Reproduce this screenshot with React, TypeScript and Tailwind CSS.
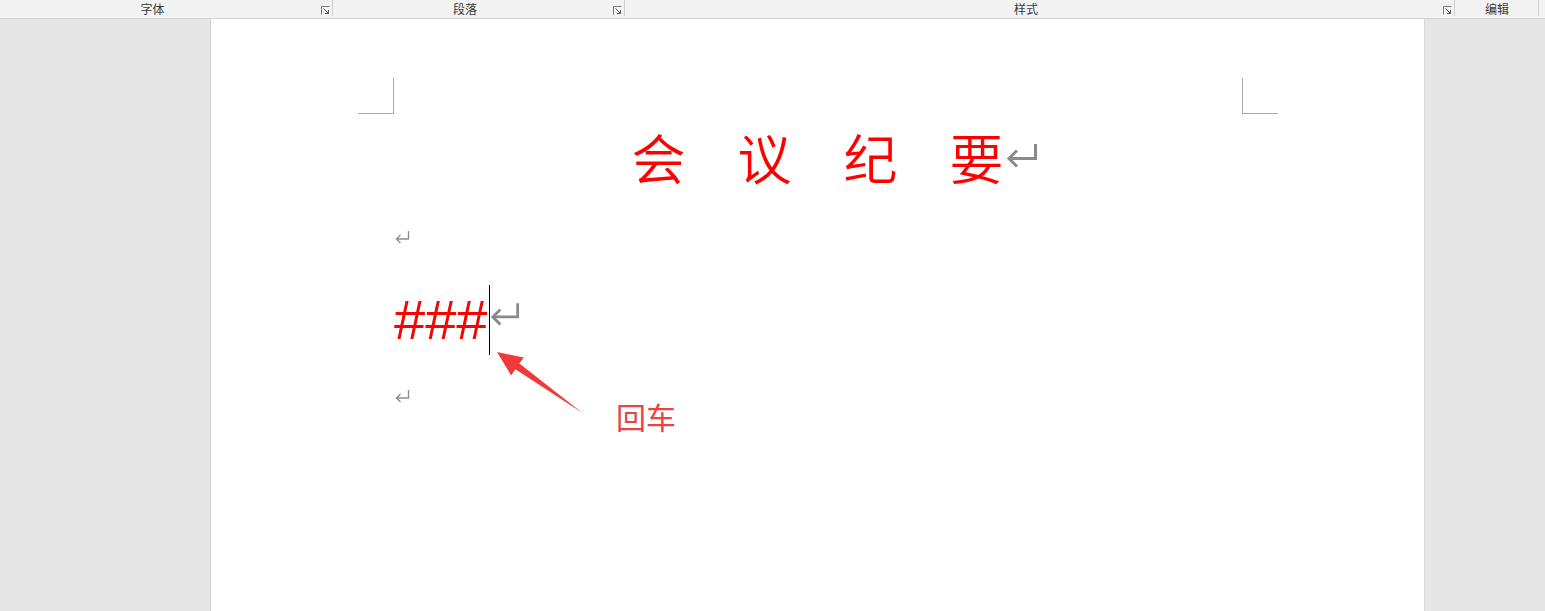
import React from "react";

const cjk = { fontFamily: '"Noto Sans CJK SC", "Noto Sans", sans-serif' };

function Launcher() {
  return (
    <svg width="9" height="9" viewBox="0 0 9 9" className="absolute right-[3px] top-[6px]">
      <path d="M0.5 8.5 V0.5 H8.5" fill="none" stroke="#7a7a7a" strokeWidth="1" />
      <path d="M2.5 2.5 L7.5 7.5 M7.5 4 V7.5 H4" fill="none" stroke="#555" strokeWidth="1" />
    </svg>
  );
}

function Section({ w, label, launcher = true }: { w: number; label: string; launcher?: boolean }) {
  return (
    <div className="relative flex h-full shrink-0" style={{ width: w }}>
      <div
        className={`flex flex-1 items-start justify-center pt-[1px] text-[12px] leading-[15px] text-[#3a3a3a] ${launcher ? "pr-[28px]" : ""}`}
        style={cjk}
      >
        {label}
      </div>
      {launcher && <Launcher />}
      <div className="absolute right-0 top-0 h-[16px] w-px bg-[#cfcfcf]" />
    </div>
  );
}

function SmallReturn() {
  return (
    <svg width="17" height="15" viewBox="0 0 17 15">
      <path d="M14.5 1 V9 H2.5" fill="none" stroke="#8c8c8c" strokeWidth="1.3" />
      <path d="M6.5 5 L2.5 9 L6.5 13" fill="none" stroke="#8c8c8c" strokeWidth="1.3" />
    </svg>
  );
}

function BigReturn({ w, h }: { w: number; h: number }) {
  return (
    <svg width={w} height={h} viewBox="0 0 32 26">
      <path d="M29.5 0 V14.5 H3" fill="none" stroke="#8a8a8a" strokeWidth="3" />
      <path d="M11 6.5 L3 14.5 L11 22.5" fill="none" stroke="#8a8a8a" strokeWidth="3" />
    </svg>
  );
}

export default function App() {
  const chars = ["会", "议", "纪", "要"];
  return (
    <div className="relative flex h-[611px] w-[1545px] flex-col overflow-hidden bg-[#e6e6e6]">
      {/* ribbon group labels */}
      <div className="flex h-[19px] shrink-0 border-b border-[#d6d6d6] bg-[#f3f3f3]">
        <Section w={333} label="字体" />
        <Section w={292} label="段落" />
        <Section w={830} label="样式" />
        <Section w={84} label="编辑" launcher={false} />
        <div className="flex-1" />
      </div>

      {/* document area */}
      <div className="flex flex-1">
        <div className="w-[211px] shrink-0 border-r border-[#cdcdcd]" />
        <div className="flex w-[1213px] shrink-0 flex-col bg-white pt-[59px]">
          {/* corner marks */}
          <div className="flex justify-between pl-[147px] pr-[146px]">
            <div className="h-[36px] w-[36px] border-b border-r border-[#a8a8a8]" />
            <div className="h-[36px] w-[36px] border-b border-l border-[#a8a8a8]" />
          </div>

          {/* title */}
          <div className="mt-[16px] flex justify-center gap-[52px] pl-[182px] pr-[182px]">
            {chars.map((c, i) => (
              <span
                key={c}
                className="relative block text-[54px] font-[350] leading-[54px] text-[#ff0000]"
                style={cjk}
              >
                {c}
                {i === chars.length - 1 && (
                  <span className="absolute left-full top-[14px] ml-[2px] block">
                    <BigReturn w={32} h={26} />
                  </span>
                )}
              </span>
            ))}
          </div>

          {/* empty paragraph */}
          <div className="ml-[183px] mt-[46px] h-[15px]">
            <SmallReturn />
          </div>

          {/* ### line */}
          <div className="ml-[183px] mt-[40px] flex h-[70px] items-start">
            <span
              className="text-[56px] leading-[70px] text-[#ff0000]"
              style={{ fontFamily: '"Liberation Sans", Arial, sans-serif' }}
            >
              ###
            </span>
            <div className="ml-[2px] h-[70px] w-px bg-black" />
            <div className="mt-[18px]">
              <BigReturn w={30} h={25} />
            </div>
          </div>

          {/* empty paragraph */}
          <div className="ml-[183px] mt-[34px] h-[15px]">
            <SmallReturn />
          </div>
        </div>
        <div className="flex-1 border-l border-[#dadada]" />
      </div>

      {/* annotation arrow */}
      <svg
        className="pointer-events-none absolute left-0 top-0"
        width="1545"
        height="611"
        viewBox="0 0 1545 611"
      >
        <polygon
          points="497,352 523.7,357.4 519.4,363.5 582.5,413 515.4,369.3 511.1,375.4"
          fill="#f03a3a"
        />
      </svg>
      <div
        className="pointer-events-none absolute left-[616px] top-[401px] text-[30px] leading-[30px] text-[#e94343]"
        style={cjk}
      >
        回车
      </div>
    </div>
  );
}
